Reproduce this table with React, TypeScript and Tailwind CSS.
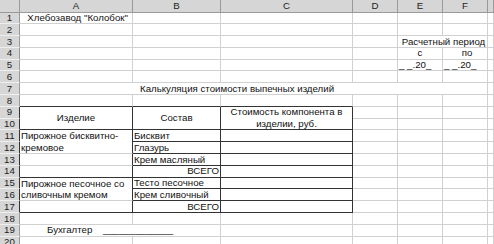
import React from "react";

type Cell = {
  r: number;
  c: number;
  rs?: number;
  cs?: number;
  text?: React.ReactNode;
  cls?: string;
  bb?: boolean; // dark bottom
  br?: boolean; // dark right
};

const cells: Cell[] = [];
const spec: Record<string, Partial<Cell>> = {};
const key = (r: number, c: number) => `${r}-${c}`;

function set(r: number, c: number, p: Partial<Cell>) {
  spec[key(r, c)] = { ...(spec[key(r, c)] || {}), ...p };
}

// content
set(1, 1, { text: 'Хлебозавод "Колобок"', cls: "justify-end pr-[4px]" });
set(3, 5, { cs: 2, text: "Расчетный период", cls: "justify-center pl-[2px]" });
set(4, 5, { text: "с", cls: "justify-center" });
set(4, 6, { text: "по", cls: "justify-center pl-[4px]" });
set(5, 5, { text: "_ _.20_", cls: "pl-[1px]" });
set(5, 6, { text: "_ _.20_", cls: "pl-[1px]" });
set(7, 1, { cs: 6, text: "Калькуляция стоимости выпечных изделий", cls: "pl-[120px]" });
set(9, 1, { rs: 2, text: "Изделие", cls: "justify-center" });
set(9, 2, { rs: 2, text: "Состав", cls: "justify-center" });
set(9, 3, {
  rs: 2,
  text: (
    <span className="text-center leading-[12px]">
      Стоимость компонента в
      <br />
      изделии, руб.
    </span>
  ),
  cls: "justify-center",
});
set(11, 1, {
  rs: 2,
  text: (
    <span className="leading-[11.8px]">
      Пирожное бисквитно-
      <br />
      кремовое
    </span>
  ),
  cls: "pl-[1px]",
});
set(11, 2, { text: "Бисквит", cls: "pl-[1px]" });
set(12, 2, { text: "Глазурь", cls: "pl-[1px]" });
set(13, 2, { text: "Крем масляный", cls: "pl-[1px]" });
set(14, 2, { text: "ВСЕГО", cls: "justify-end pr-[1px]" });
set(15, 1, {
  rs: 2,
  text: (
    <span className="leading-[11.8px]">
      Пирожное песочное со
      <br />
      сливочным кремом
    </span>
  ),
  cls: "pl-[1px]",
});
set(15, 2, { text: "Тесто песочное", cls: "pl-[1px]" });
set(16, 2, { text: "Крем сливочный", cls: "pl-[1px]" });
set(17, 2, { text: "ВСЕГО", cls: "justify-end pr-[1px]" });
set(19, 1, {
  cs: 2,
  text: (
    <span className="whitespace-pre">{"Бухгалтер    _____________"}</span>
  ),
  cls: "pl-[27px]",
});

// borders
for (let c = 1; c <= 3; c++) {
  set(8, c, { bb: true });
  set(10, c, { bb: true });
  set(17, c, { bb: true });
}
set(9, 1, { br: true });
set(9, 2, { br: true });
set(9, 3, { br: true });
for (let r = 11; r <= 17; r++) {
  set(r, 1, { br: true });
  set(r, 2, { br: true, bb: true });
  set(r, 3, { br: true, bb: true });
}
set(14, 1, { bb: true });

// build list with spans
const covered = new Set<string>();
for (let r = 1; r <= 20; r++) {
  for (let c = 1; c <= 7; c++) {
    const k = key(r, c);
    if (covered.has(k)) continue;
    const s = spec[k] || {};
    const rs = s.rs || 1;
    const cs = s.cs || 1;
    for (let i = 0; i < rs; i++)
      for (let j = 0; j < cs; j++) covered.add(key(r + i, c + j));
    let bb = s.bb;
    const br = s.br;
    if (rs > 1) bb = spec[key(r + rs - 1, c)]?.bb ?? s.bb;
    cells.push({ r, c, rs, cs, text: s.text, cls: s.cls, bb, br });
  }
}

const letters = ["A", "B", "C", "D", "E", "F", ""];

export default function App() {
  return (
    <div
      className="w-[494px] h-[244px] overflow-hidden bg-white text-[9.7px] text-[#111]"
      style={{ fontFamily: '"Liberation Sans", Arial, sans-serif' }}
    >
      <div className="grid grid-cols-[20px_113px_88px_132px_45px_45px_45px_1fr] grid-rows-[12.5px_repeat(20,11.8px)]">
        {/* corner */}
        <div className="row-start-1 col-start-1 bg-[#d6d6d6] border-r border-b border-[#9a9a9a]" />
        {letters.map((l, i) => (
          <div
            key={"h" + i}
            style={{ gridColumnStart: i + 2, gridRowStart: 1 }}
            className="bg-[#d6d6d6] border-r border-b border-[#9a9a9a] flex items-center justify-center text-[#222] leading-none"
          >
            {l}
          </div>
        ))}
        {Array.from({ length: 20 }, (_, i) => i + 1).map((r) => (
          <div
            key={"rh" + r}
            style={{ gridRowStart: r + 1, gridColumnStart: 1 }}
            className={
              "bg-[#d6d6d6] border-b border-[#eeeeee] border-r flex items-center justify-center text-[#222] leading-none " +
              (r >= 9 && r <= 17 ? "border-r-[#333]" : "border-r-[#9a9a9a]")
            }
          >
            {r}
          </div>
        ))}
        {cells.map((c) => (
          <div
            key={key(c.r, c.c)}
            style={{
              gridRow: `${c.r + 1} / span ${c.rs}`,
              gridColumn: `${c.c + 1} / span ${c.cs}`,
            }}
            className={
              "flex items-center whitespace-nowrap overflow-visible leading-none border-r border-b " +
              (c.bb ? "border-b-[#333] " : "border-b-[#d0d0d0] ") +
              (c.br ? "border-r-[#333] " : "border-r-[#d0d0d0] ") +
              (c.r === 11 || c.r === 15 ? (c.c === 1 ? "!items-start " : "") : "") +
              (c.cls || "")
            }
          >
            {c.text}
          </div>
        ))}
      </div>
    </div>
  );
}
